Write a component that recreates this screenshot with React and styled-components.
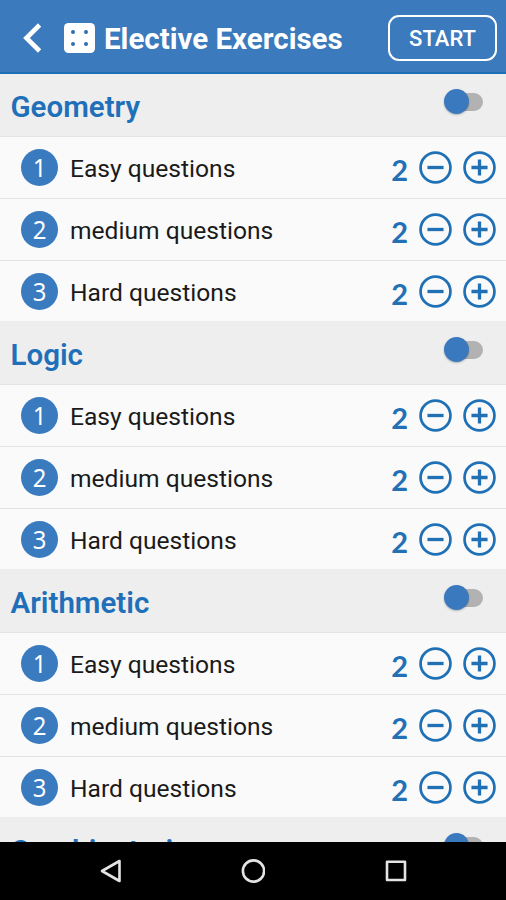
import React from 'react';
import styled, { createGlobalStyle } from 'styled-components';

const levels = ['Easy questions', 'medium questions', 'Hard questions'];
const sections = [
  { name: 'Geometry', levels },
  { name: 'Logic', levels },
  { name: 'Arithmetic', levels },
  { name: 'Combinatorics', levels: [] },
];

export default function App() {
  return (
    <Screen>
      <GlobalStyle />
      <Header>
        <BackIcon viewBox="0 0 20 32">
          <path d="M17.6 3 4.4 16l13.2 13" />
        </BackIcon>
        <DiceIcon viewBox="0 0 31 30">
          <rect width="31" height="30" rx="4.5" fill="#fff" />
          <circle cx="9" cy="9" r="2" />
          <circle cx="22" cy="9" r="2" />
          <circle cx="9" cy="21" r="2" />
          <circle cx="22" cy="21" r="2" />
        </DiceIcon>
        <Title>Elective Exercises</Title>
        <StartButton>START</StartButton>
      </Header>

      <List>
        {sections.map((s) => (
          <section key={s.name}>
            <SectionHeader>
              <SectionName>{s.name}</SectionName>
              <Switch>
                <SwitchThumb />
              </Switch>
            </SectionHeader>
            {s.levels.map((level, i) => (
              <Row key={level}>
                <Badge>
                  <BadgeNumber>{i + 1}</BadgeNumber>
                </Badge>
                <Label>{level}</Label>
                <Count>2</Count>
                <CountButton aria-label="minus">
                  <CircleIcon viewBox="0 0 34 34">
                    <circle cx="17" cy="17" r="15.4" />
                    <path d="M8.7 17h16.6" />
                  </CircleIcon>
                </CountButton>
                <CountButton aria-label="plus">
                  <CircleIcon viewBox="0 0 34 34">
                    <circle cx="17" cy="17" r="15.4" />
                    <path d="M8.7 17h16.6M17 8.7v16.6" />
                  </CircleIcon>
                </CountButton>
              </Row>
            ))}
          </section>
        ))}
      </List>

      <NavBar>
        <NavIcon viewBox="0 0 24 26">
          <path d="M20.5 3v20L3 13z" />
        </NavIcon>
        <NavIcon viewBox="0 0 24 26">
          <circle cx="12.5" cy="13" r="10.6" />
        </NavIcon>
        <NavIcon viewBox="0 0 24 26">
          <path d="M4 3.7h18v18.3H4z" />
        </NavIcon>
      </NavBar>
    </Screen>
  );
}

const GlobalStyle = createGlobalStyle`
  * {
    box-sizing: border-box;
  }
  body {
    margin: 0;
    font-family: Roboto, 'Liberation Sans', sans-serif;
  }
`;
const Screen = styled.div`
  display: flex;
  flex-direction: column;
  width: 506px;
  height: 900px;
  overflow: hidden;
  background: #fafafa;
`;
const Header = styled.header`
  display: flex;
  align-items: center;
  flex: none;
  height: 74px;
  padding: 4px 9px 0 22px;
  background: #3b7abd;
  border-bottom: 2px solid #1b6fb5;
`;
const BackIcon = styled.svg`
  width: 20px;
  height: 32px;
  margin-right: 22px;
  fill: none;
  stroke: #fff;
  stroke-width: 4.6;
`;
const DiceIcon = styled.svg`
  width: 31px;
  height: 30px;
  margin-right: 9px;
  fill: #2f6fb2;
`;
const Title = styled.h1`
  flex: 1;
  margin: 1px 0 0;
  color: #fff;
  font-size: 29.5px;
  font-weight: 700;
  line-height: 34px;
  white-space: nowrap;
`;
const StartButton = styled.button`
  width: 109px;
  height: 46px;
  padding: 1px 0 0;
  border: 2px solid #fff;
  border-radius: 11px;
  background: none;
  color: #fff;
  font-family: inherit;
  font-size: 22px;
  font-weight: 500;
`;
const List = styled.main`
  flex: 1;
  min-height: 0;
  margin-top: -1px;
  overflow: hidden;
`;
const SectionHeader = styled.div`
  display: flex;
  justify-content: space-between;
  height: 64px;
  padding: 0 23px 0 10.5px;
  background: #eee;
  border-top: 1px solid #eee;
  border-bottom: 1px solid #e4e4e4;
  section:first-child > & {
    border-top-color: #1b6fb5;
  }
`;
const SectionName = styled.h2`
  margin: 16px 0 0;
  color: #1f70b8;
  font-size: 29.5px;
  font-weight: 600;
  line-height: 34px;
`;
const Switch = styled.div`
  width: 37px;
  height: 18px;
  margin-top: 18.5px;
  border-radius: 9px;
  background: #b2b2b2;
`;
const SwitchThumb = styled.div`
  width: 25px;
  height: 25px;
  margin: -4px 0 0 -2px;
  border-radius: 50%;
  background: #3a79bd;
  box-shadow: 0 1px 2px rgba(0, 0, 0, 0.25);
`;
const Row = styled.div`
  display: flex;
  align-items: center;
  height: 62px;
  padding: 0 10px 0 21px;
  border-bottom: 1px solid #e4e4e4;
  &:last-child {
    height: 60px;
    padding-top: 1px;
    border-bottom: none;
  }
`;
const Badge = styled.span`
  width: 37px;
  height: 37px;
  margin-right: 12px;
  border-radius: 50%;
  background: #3a7abf;
  text-align: center;
`;
const BadgeNumber = styled.span`
  display: block;
  color: #fff;
  font-family: 'Noto Sans', 'Open Sans', sans-serif;
  font-size: 26px;
  line-height: 36px;
  transform: scaleX(0.92);
`;
const Label = styled.span`
  flex: 1;
  padding-top: 1px;
  color: #1a1a1a;
  font-size: 24.6px;
`;
const Count = styled.span`
  padding-top: 3px;
  color: #2470b5;
  font-family: Lato, sans-serif;
  font-size: 29px;
  font-weight: 700;
`;
const CountButton = styled.button`
  display: flex;
  margin-left: 11px;
  padding: 0;
  border: none;
  background: none;
`;
const CircleIcon = styled.svg`
  width: 33px;
  height: 33px;
  fill: none;
  stroke: #1f70b5;
  stroke-width: 2.8;

  path {
    stroke-width: 3.4;
  }
`;
const NavBar = styled.nav`
  display: flex;
  align-items: center;
  justify-content: center;
  gap: 118px;
  flex: none;
  height: 58px;
  background: #000;
`;
const NavIcon = styled.svg`
  width: 24px;
  height: 26px;
  fill: none;
  stroke: #e4e4e4;
  stroke-width: 2.6;
  stroke-linejoin: round;
`;
